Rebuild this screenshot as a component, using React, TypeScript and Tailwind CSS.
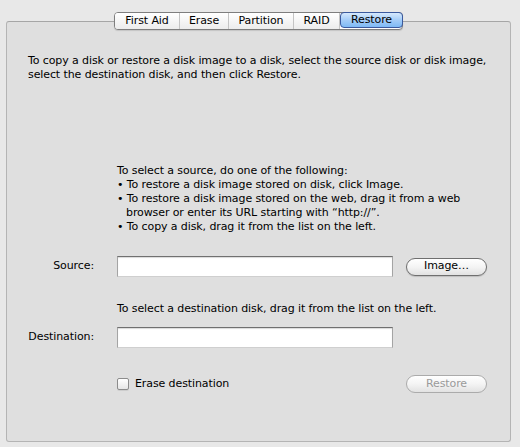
import React from "react";

const font = { fontFamily: '"DejaVu Sans", "Liberation Sans", sans-serif' };

function Tab({ label, w, active, last }: { label: string; w: string; active?: boolean; last?: boolean }) {
  return (
    <div
      className={
        "flex items-center justify-center h-full text-[11px] " +
        w +
        " " +
        (active
          ? "bg-gradient-to-b from-[#d6e9fd] via-[#a5cdf8] to-[#7fbaf5] border border-[#3b5a9e] rounded-[4px] -my-px -mr-px text-black"
          : "bg-gradient-to-b from-[#ffffff] to-[#ececec] text-black") +
        (!active && !last ? " border-r border-[#c4c4c4]" : "")
      }
    >
      {label}
    </div>
  );
}

function Field() {
  return (
    <div className="w-[276px] h-[21px] bg-white border border-[#a4a4a4] border-t-[#707070] border-b-[#cfcfcf] shadow-[inset_0_1px_1px_rgba(0,0,0,0.15)]" />
  );
}

function PillButton({ label, disabled }: { label: string; disabled?: boolean }) {
  return (
    <div
      className={
        "w-[81px] h-[18px] rounded-full flex items-center justify-center text-[11px] bg-gradient-to-b from-[#ffffff] via-[#f4f4f4] to-[#e2e2e2] " +
        (disabled
          ? "border border-[#ababab] text-[#9a9a9a]"
          : "border border-[#6f6f6f] text-black shadow-[0_1px_1px_rgba(0,0,0,0.15)]")
      }
    >
      {label}
    </div>
  );
}

export default function App() {
  return (
    <div className="w-[520px] h-[447px] bg-[#e8e8e8] pt-[21px] px-[6px] text-black tracking-[-0.1px]" style={font}>
      <div className="relative h-[421px] w-[505px] bg-[#dfdfdf] border border-[#b4b4b4] border-t-[#a6a6a6] rounded-[3px]">
        <div className="absolute left-0 right-0 -top-[10px] flex justify-center">
          <div className="flex h-[18px] border border-[#7e7e7e] rounded-[4px] bg-white shadow-[0_1px_1px_rgba(0,0,0,0.12)] overflow-visible">
            <Tab label="First Aid" w="w-[65px] rounded-l-[3px]" />
            <Tab label="Erase" w="w-[49px]" />
            <Tab label="Partition" w="w-[65px]" />
            <Tab label="RAID" w="w-[46px]" />
            <Tab label="Restore" w="w-[63px]" active last />
          </div>
        </div>

        <div className="pt-[32px] pl-[21px] text-[11px] leading-[14px]">
          <p>
            To copy a disk or restore a disk image to a disk, select the source disk or disk image,
            <br />
            select the destination disk, and then click Restore.
          </p>
        </div>

        <div className="mt-[82px] pl-[110px] text-[11px] leading-[14px]">
          <p>To select a source, do one of the following:</p>
          <p>• To restore a disk image stored on disk, click Image.</p>
          <p>• To restore a disk image stored on the web, drag it from a web</p>
          <p className="pl-[9px]">browser or enter its URL starting with “http://”.</p>
          <p>• To copy a disk, drag it from the list on the left.</p>
        </div>

        <div className="mt-[22px] flex items-center text-[11px]">
          <div className="w-[87px] text-right">Source:</div>
          <div className="ml-[23px]">
            <Field />
          </div>
          <div className="ml-[13px]">
            <PillButton label="Image…" />
          </div>
        </div>

        <div className="mt-[25px] pl-[110px] text-[11px] leading-[14px]">
          To select a destination disk, drag it from the list on the left.
        </div>

        <div className="mt-[11px] flex items-center text-[11px]">
          <div className="w-[87px] text-right">Destination:</div>
          <div className="ml-[23px]">
            <Field />
          </div>
        </div>

        <div className="mt-[27px] flex items-center text-[11px]">
          <div className="ml-[110px] flex items-center w-[289px]">
            <div className="w-[12px] h-[12px] rounded-[2px] border border-[#8c8c8c] bg-gradient-to-b from-[#ffffff] to-[#e6e6e6] shadow-[0_1px_0_rgba(0,0,0,0.08)]" />
            <span className="ml-[6px]">Erase destination</span>
          </div>
          <PillButton label="Restore" disabled />
        </div>
      </div>
    </div>
  );
}
